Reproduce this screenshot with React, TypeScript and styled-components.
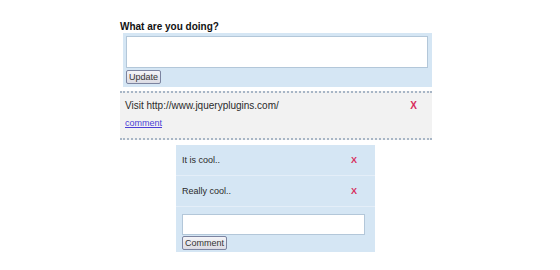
import styled, { createGlobalStyle } from 'styled-components';

const Global = createGlobalStyle`
    html, body {
        margin: 0;
        padding: 0;
        background: #fff;
    }
    body {
        font-family: "Liberation Sans", Arial, sans-serif;
        color: #333;
    }
`;

const Page = styled.div`
    padding: 21px 0 0 120px;
`;

const Wall = styled.div`
    width: 312px;
`;

const Title = styled.h3`
    margin: 0;
    font-size: 10px;
    line-height: 12px;
    font-weight: bold;
    color: #111;
`;

const PostForm = styled.form`
    margin: 0 0 0 3px;
    background: #d5e6f4;
    padding: 3px 4px 3px 3px;
    display: flex;
    flex-direction: column;
    align-items: flex-start;
    gap: 2px;
`;

const Box = styled.textarea<{ h: number }>`
    box-sizing: border-box;
    width: 100%;
    height: ${props => props.h}px;
    margin: 0;
    border: 1px solid #b3c7d9;
    background: #fff;
    resize: none;
    display: block;
`;

const Button = styled.button`
    font-family: "Liberation Sans", Arial, sans-serif;
    font-size: 9px;
    line-height: 9px;
    height: 14px;
    padding: 0 2px;
    margin: 0;
    color: #333;
    background: linear-gradient(#f4f4f8, #dcdce4);
    border: 1px solid #7c84a0;
    border-radius: 2px;
`;

const Status = styled.div`
    margin-top: 4px;
    border-top: 2px dotted #a8b6c6;
    border-bottom: 2px dotted #a8b6c6;
    background: #f2f2f2;
    padding: 6px 15px 8px 5px;
`;

const Row = styled.div`
    display: flex;
    justify-content: space-between;
    align-items: center;
`;

const StatusText = styled.span`
    font-size: 10px;
    line-height: 13px;
    color: #2a2a2a;
`;

const Remove = styled.span<{ size: number }>`
    color: #d82c5c;
    font-size: ${props => props.size}px;
    font-weight: bold;
    line-height: 1;
    cursor: pointer;
`;

const CommentLink = styled.a`
    display: inline-block;
    margin-top: 5px;
    font-size: 9px;
    color: #4b3fd6;
    text-decoration: underline;
`;

const Comments = styled.div`
    margin: 5px 0 0 56px;
    width: 199px;
    background: #d5e6f4;
`;

const CommentRow = styled.div`
    display: flex;
    justify-content: space-between;
    align-items: center;
    height: 30px;
    padding: 0 18px 0 6px;
    border-bottom: 1px solid #e4eef8;
    font-size: 9px;
    color: #2a2a2a;
`;

const CommentForm = styled.form`
    padding: 7px 10px 2px 6px;
    display: flex;
    flex-direction: column;
    align-items: flex-start;
    gap: 1px;
`;

const comments = ['It is cool..', 'Really cool..'];

const App = () => (
    <Page>
        <Global />
        <Wall>
            <Title>What are you doing?</Title>
            <PostForm onSubmit={e => e.preventDefault()}>
                <Box h={32} />
                <Button>Update</Button>
            </PostForm>
            <Status>
                <Row>
                    <StatusText>Visit http://www.jqueryplugins.com/</StatusText>
                    <Remove size={10}>X</Remove>
                </Row>
                <CommentLink href="#">comment</CommentLink>
            </Status>
            <Comments>
                {comments.map(c => (
                    <CommentRow key={c}>
                        <span>{c}</span>
                        <Remove size={9}>X</Remove>
                    </CommentRow>
                ))}
                <CommentForm onSubmit={e => e.preventDefault()}>
                    <Box h={21} />
                    <Button>Comment</Button>
                </CommentForm>
            </Comments>
        </Wall>
    </Page>
);

export default App;
